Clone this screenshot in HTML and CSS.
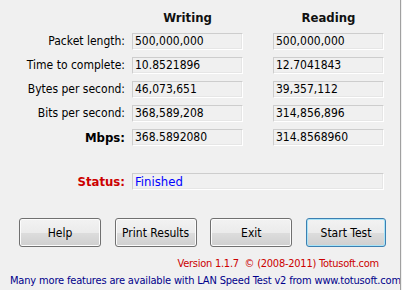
FILE: index.html
```html
<!DOCTYPE html>
<html lang="en">
<head>
    <meta charset="UTF-8">
    <title>LAN Speed Test</title>
    <link rel="stylesheet" href="styles.css">
</head>
<body>
    <div class="window">
        <div class="results">
            <div></div>
            <div class="col-head">Writing</div>
            <div class="col-head">Reading</div>

            <div class="label">Packet length:</div>
            <div class="field">500,000,000</div>
            <div class="field">500,000,000</div>

            <div class="label">Time to complete:</div>
            <div class="field">10.8521896</div>
            <div class="field">12.7041843</div>

            <div class="label">Bytes per second:</div>
            <div class="field">46,073,651</div>
            <div class="field">39,357,112</div>

            <div class="label">Bits per second:</div>
            <div class="field">368,589,208</div>
            <div class="field">314,856,896</div>

            <div class="label label-bold">Mbps:</div>
            <div class="field">368.5892080</div>
            <div class="field">314.8568960</div>
        </div>

        <div class="status-row">
            <div class="label label-status">Status:</div>
            <div class="field field-status">Finished</div>
        </div>

        <div class="buttons">
            <button class="btn">Help</button>
            <button class="btn">Print Results</button>
            <button class="btn">Exit</button>
            <button class="btn btn-default">Start Test</button>
        </div>

        <div class="version">Version 1.1.7 &nbsp;&copy; (2008-2011) Totusoft.com</div>
        <div class="promo">Many more features are available with LAN Speed Test v2 from www.totusoft.com</div>
    </div>
</body>
</html>
```

FILE: styles.css
```css
body {
    margin: 0;
    background-color: #f0f0f0;
    font-family: "DejaVu Sans Condensed", "DejaVu Sans", sans-serif;
    font-size: 12px;
    color: #000;
}
.window {
    width: 400px;
    height: 286px;
    border-right: 1px solid #a0a0a0;
    border-bottom: 1px solid #a0a0a0;
    padding-top: 9px;
    box-sizing: content-box;
    overflow: hidden;
}
.results {
    display: grid;
    grid-template-columns: 132px 141px 111px;
    grid-auto-rows: 17px;
    row-gap: 7px;
}
.col-head {
    width: 111px;
    text-align: center;
    font-weight: bold;
    font-size: 13px;
    line-height: 17px;
    color: #111;
}
.label {
    text-align: right;
    padding-right: 7px;
    line-height: 17px;
    white-space: nowrap;
}
.label-bold {
    font-weight: bold;
    font-size: 13px;
}
.field {
    width: 111px;
    height: 17px;
    box-sizing: border-box;
    padding-left: 2px;
    line-height: 15px;
    background-color: #f0f0f0;
    border: 1px solid;
    border-color: #cdcdcd #ffffff #ffffff #cdcdcd;
    box-shadow: inset -1px -1px 0 #e6e6e6;
    white-space: nowrap;
}
.status-row {
    display: grid;
    grid-template-columns: 132px 252px;
    margin-top: 27px;
}
.label-status {
    color: #cc0000;
    font-weight: bold;
    font-size: 13px;
}
.field-status {
    width: 252px;
    color: #0000ff;
    font-size: 13px;
}
.buttons {
    display: flex;
    justify-content: space-between;
    width: 367px;
    margin: 28px 0 0 19px;
}
.btn {
    width: 82px;
    height: 29px;
    font-family: inherit;
    font-size: 12px;
    color: #000;
    border: 1px solid #707070;
    border-radius: 3px;
    background: linear-gradient(#f2f2f2 0%, #ebebeb 50%, #dddddd 51%, #cfcfcf 100%);
    box-shadow: inset 0 0 0 1px #fcfcfc;
    padding: 0;
}
.btn-default {
    width: 80px;
    border-color: #3c7fb1;
    box-shadow: inset 0 0 0 1px #a8e4f8;
}
.version {
    margin-top: 9px;
    padding-right: 21px;
    text-align: right;
    color: #cc0000;
    font-size: 11px;
    line-height: 15px;
    letter-spacing: -0.25px;
}
.promo {
    margin-top: 2px;
    padding-left: 10px;
    color: #00008b;
    font-size: 11px;
    line-height: 15px;
    letter-spacing: -0.17px;
    white-space: nowrap;
}
```
